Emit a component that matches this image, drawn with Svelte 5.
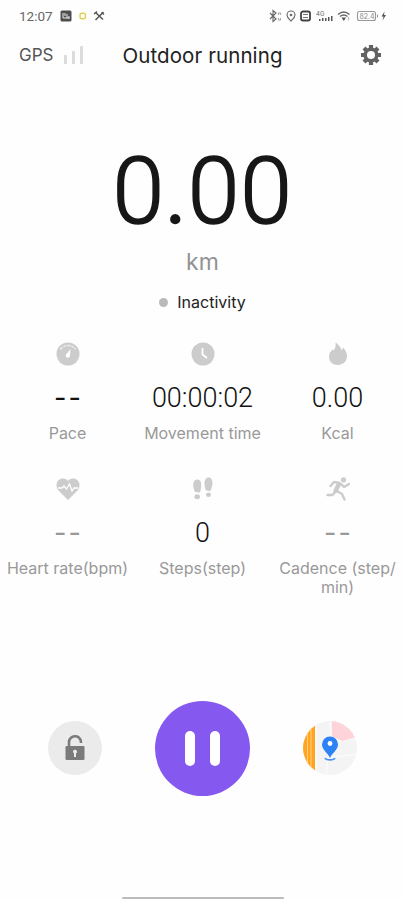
<script lang="ts">
  type Metric = {
    icon: string;
    value: string;
    label: string;
    idle?: boolean;
  };

  let paused = $state(false);

  const metrics: Metric[] = [
    { icon: 'pace', value: '--', label: 'Pace' },
    { icon: 'clock', value: '00:00:02', label: 'Movement time' },
    { icon: 'flame', value: '0.00', label: 'Kcal' },
    { icon: 'heart', value: '--', label: 'Heart rate(bpm)', idle: true },
    { icon: 'steps', value: '0', label: 'Steps(step)' },
    { icon: 'runner', value: '--', label: 'Cadence (step/ min)', idle: true },
  ];
</script>

<div class="screen">
  <div class="status-bar">
    <span class="time">12:07</span>
    <svg class="status-left" width="46" height="12" viewBox="0 0 46 12">
      <rect x="0.5" y="0.5" width="11" height="11" rx="1.5" fill="#4d4d4d" />
      <path d="M3 3v5h6M5 3v3M7 4v4M9 6v3" stroke="#eee" fill="none" />
      <rect x="20" y="3.2" width="5.5" height="5.5" rx="2" fill="none" stroke="#e3d04f" stroke-width="1.4" />
      <path d="M35.5 2.5l7.5 7M43.5 2l-8 8" stroke="#555" stroke-width="1.5" />
      <path d="M34 4l3-2.5M41.5 2.5l2.5 2" stroke="#555" stroke-width="1.5" />
    </svg>
    <svg class="status-right" width="118" height="14" viewBox="0 0 118 14">
      <g fill="none" stroke="#666" stroke-width="1.1">
        <path d="M1 4l6 6-3 2.5v-11l3 2.5-6 6" />
        <path d="M9.5 6V4h2v2M9.5 9v2h2V9" stroke="#aaa" />
        <path d="M22 12c-2-2-4-3.5-4-6a4 4 0 0 1 8 0c0 2.5-2 4-4 6z" />
        <circle cx="22" cy="6" r="0.8" />
        <rect x="32" y="2.5" width="9" height="9" rx="2" stroke="#444" stroke-width="1.8" />
        <path d="M34 5.5h5M34 8.5h5" stroke="#777" />
        <path d="M79.500 11.500V8" stroke="#bbb" />
        <path d="M69 5.500c3.500-3 8-3 11.500 0M71 7.500c2.500-2 5-2 7.500 0" stroke-width="1.500" />
        <rect x="88.500" y="2.500" width="18" height="9" rx="2" stroke="#999" />
        <path d="M108.500 5.500v3" stroke="#999" />
      </g>
      <path d="M50 10h1.500v2H50zM53 9h1.500v3H53zM56 9h1.500v3H56zM59 8h1.500v4H59zM62 7h1.500v5H62zM72.500 8.500h4.500l-2.200 3.500zM115.500 2.500l-3 5h2l-1 4 3.500-5.500h-2z" fill="#555" />
      <text x="47" y="6.500" class="tiny">4G</text>
      <text x="90.500" y="9.700" class="battery">82.4</text>
    </svg>
  </div>

  <header class="header">
    <div class="gps">
      <span>GPS</span>
      <svg width="20" height="18" viewBox="0 0 20 18" fill="#dcdcdc">
        <rect x="0" y="9" width="3" height="9" rx="0.5" />
        <rect x="8" y="5" width="3" height="13" rx="0.5" />
        <rect x="16" y="0" width="3" height="18" rx="0.5" />
      </svg>
    </div>
    <h1>Outdoor running</h1>
    <button type="button" class="settings" aria-label="Settings">
      <svg width="22" height="22" viewBox="0 0 22 22">
        <g stroke="#626262" stroke-width="4.200">
          <path d="M11 1v20M1 11h20" />
          <path d="M4 4l14 14M18 4L4 18" />
        </g>
        <circle cx="11" cy="11" r="7.600" fill="#626262" />
        <circle cx="11" cy="11" r="4" fill="#fff" />
      </svg>
    </button>
  </header>

  <section class="distance">
    <div class="distance-value">0<span class="point">.</span>00</div>
    <div class="unit">km</div>
    <div class="activity"><span class="dot"></span>Inactivity</div>
  </section>

  <section class="metrics">
    {#each metrics as metric}
      <div class="metric">
        <svg class="metric-icon" width="24" height="24" viewBox="0 0 24 24" fill="#cccccc">
          {#if metric.icon === 'pace'}
            <circle cx="12" cy="12" r="11.500" />
            <path d="M4.500 7.500a9 9 0 0 1 15 0" fill="none" stroke="#efefef" stroke-width="1.400" stroke-dasharray="3 1" />
            <path d="M14.500 7l-.5 6.500a2.200 2.200 0 1 1-3-2z" fill="#fff" />
          {:else if metric.icon === 'clock'}
            <circle cx="12" cy="12" r="11.500" />
            <path d="M11.500 6v6.500l4.500 3.500" fill="none" stroke="#fff" stroke-width="1.800" />
          {:else if metric.icon === 'flame'}
            <path d="M9.500 0.500c3 2 5 4.500 6 7.500 1-.5 1.500-1.500 1.500-2.500 3 3 4 6 4 8.500 0 5.500-4 9-9.200 9S3 20 3 14.500c0-3.500 2-5.500 3.500-7l1 1C9.500 6.500 10 3.500 9.500 0.500z" />
          {:else if metric.icon === 'heart'}
            <path d="M12 23L2.500 13.500C-1 9.500 0 2 6.500 1.500 9 1.300 11 2.500 12 4c1-1.500 3-2.700 5.500-2.500C24 2 25 9.500 21.500 13.500z" />
            <path d="M2 11h4l2-2 2.500 3 3-5 2.500 7 2-3h4" fill="none" stroke="#fff" stroke-width="1.300" />
          {:else if metric.icon === 'steps'}
            <path d="M6.500 2.500c3 0 4 3 3.700 6.500-.3 3-.7 5-1.200 6.500l-5-.5C3 12 2 10 2.200 7 2.400 4.500 4 2.500 6.500 2.500z" />
            <ellipse cx="6.200" cy="19.700" rx="2.800" ry="2.500" />
            <path d="M17.500 0.500c3 0 4 2.500 4 5.500 0 3-1 5-2 8l-4.500-.5c-.7-2-1.500-4-1.500-7 0-3.500 1.500-6 4-6z" />
            <ellipse cx="17.500" cy="17.800" rx="2.500" ry="2.300" />
          {:else}
            <circle cx="17.500" cy="2.800" r="2.600" />
            <g fill="none" stroke="#cccccc" stroke-linecap="round" stroke-linejoin="round">
              <path d="M13 7l-3.500 7" stroke-width="4.500" />
              <path d="M13.500 6L8 5 4.500 9M15 7l3 3 5-3M10 14l-3.500 4H1.500M11 14l5 3 2.500 5.500" stroke-width="2.400" />
            </g>
          {/if}
        </svg>
        <div class="value" class:idle={metric.idle} class:empty={metric.value === '--'}>{metric.value}</div>
        <div class="label">{metric.label}</div>
      </div>
    {/each}
  </section>

  <section class="controls">
    <button type="button" class="round lock" aria-label="Unlock">
      <svg width="20" height="26" viewBox="0 0 20 26">
        <path d="M4 12V7.500a6 6 0 0 1 12-.5v1" fill="none" stroke="#7b7b7b" stroke-width="2.600" />
        <rect x="0.500" y="11" width="19" height="14" rx="1.200" fill="#7b7b7b" />
        <path d="M8 17a2 2 0 1 1 3 1.500v3.500H9v-3.500z" fill="#eee" />
      </svg>
    </button>
    <button type="button" class="round pause" aria-label="Pause" onclick={() => (paused = !paused)}>
      {#if paused}
        <svg width="34" height="34" viewBox="0 0 34 34"><path d="M9 3l21 14L9 31z" fill="#fff" /></svg>
      {:else}
        <span class="pause-bar"></span>
        <span class="pause-bar"></span>
      {/if}
    </button>
    <button type="button" class="round map" aria-label="Map">
      <svg width="54" height="54" viewBox="0 0 54 54">
        <rect width="54" height="54" fill="#f4f4f4" />
        <path d="M0 0h12v54H0z" fill="#ffa51f" />
        <path d="M4.500 0v54M8 0v54" stroke="#ffd083" stroke-width="1" />
        <path d="M13 0v54M26 30l-3 24M28 19L27 0M28 21l26-4M24 37l30-4" stroke="#fafafa" stroke-width="1.500" fill="none" />
        <path d="M29 0h25v16l-15 4-10-5z" fill="#ffd4d8" />
        <path d="M27 37c-2-5-8-8-8-13.500a8 8 0 0 1 16 0c0 5.500-6 8.500-8 13.500z" fill="#2d83f5" />
        <circle cx="27" cy="22.500" r="2.400" fill="#fff" />
        <path d="M22 37c1 2.500 9 2.500 10 0" stroke="#4a94ef" stroke-width="1.800" fill="none" />
      </svg>
    </button>
  </section>

  <div class="home-bar"></div>
</div>

<style>
  :global(body) {
    background: #fefefe;
  }

  .screen {
    display: flex;
    flex-direction: column;
    width: 404px;
    height: 900px;
    box-sizing: border-box;
    overflow: hidden;
    background: #fefefe;
    color: #222;
    font-family: Inter, "Liberation Sans", sans-serif;
  }

  button {
    padding: 0;
    border: none;
    background: none;
    cursor: pointer;
  }

  svg {
    display: block;
  }

  .status-bar {
    display: flex;
    align-items: center;
    height: 32px;
    padding: 0 17px 0 19px;
  }

  .time {
    width: 41px;
    font-family: Roboto, sans-serif;
    font-size: 13.5px;
    color: #666;
  }

  .status-right {
    margin-left: auto;
  }

  .tiny {
    font-size: 6px;
    fill: #666;
  }

  .battery {
    font-size: 7px;
    fill: #888;
  }

  .header {
    display: grid;
    grid-template-columns: 1fr auto 1fr;
    align-items: center;
    height: 46px;
    padding: 0 22px 0 19px;
  }

  .gps {
    display: flex;
    align-items: center;
    gap: 11px;
    font-size: 17px;
    color: #555;
  }

  h1 {
    margin: 1px -2px 0 2px;
    font-size: 20.5px;
    font-weight: 400;
    letter-spacing: 0.1px;
  }

  .settings {
    justify-self: end;
  }

  .distance {
    display: flex;
    flex-direction: column;
    align-items: center;
    height: 262px;
    padding: 64px 0 0 1px;
    box-sizing: border-box;
  }

  .distance-value {
    height: 100px;
    line-height: 100px;
    font-family: Roboto, sans-serif;
    font-size: 93px;
    font-weight: 300;
    letter-spacing: 0.8px;
    color: #171717;
    -webkit-text-stroke: 1.6px #171717;
  }

  .point {
    -webkit-text-stroke-width: 2.6px;
  }

  .unit {
    margin-top: 4px;
    line-height: 32px;
    font-size: 23px;
    color: #929292;
  }

  .activity {
    display: flex;
    align-items: center;
    gap: 9px;
    margin-top: 14px;
    line-height: 20px;
    font-size: 16px;
  }

  .dot {
    width: 9px;
    height: 9px;
    border-radius: 50%;
    background: #b9b9b9;
  }

  .metrics {
    display: grid;
    grid-template-columns: repeat(3, 135px);
    grid-auto-rows: 135px;
  }

  .metric {
    display: flex;
    flex-direction: column;
    align-items: center;
    padding: 2px 6px 0;
  }

  .value {
    height: 32px;
    margin-top: 16px;
    line-height: 32px;
    font-family: Roboto, sans-serif;
    font-size: 27px;
    font-weight: 300;
    color: #111;
  }

  .value.empty {
    margin-right: -2px;
    line-height: 31px;
    font-family: Inter, sans-serif;
    font-weight: 400;
    letter-spacing: 2px;
  }

  .value.idle {
    color: #999;
  }

  .label {
    margin-top: 10px;
    line-height: 18.5px;
    font-size: 16px;
    color: #999;
    text-align: center;
  }

  .controls {
    display: flex;
    align-items: center;
    justify-content: space-between;
    height: 96px;
    margin-top: 90px;
    padding: 0 47px 0 48px;
  }

  .round {
    display: flex;
    align-items: center;
    justify-content: center;
    width: 54px;
    height: 54px;
    border-radius: 50%;
    overflow: hidden;
  }

  .lock {
    background: #ebebeb;
  }

  .pause {
    gap: 15px;
    width: 95px;
    height: 95px;
    background: #8559f0;
  }

  .pause-bar {
    width: 10px;
    height: 35px;
    border-radius: 5px;
    background: #fff;
  }

  .home-bar {
    width: 162px;
    height: 2px;
    margin: auto auto 1px 122px;
    border-radius: 1px;
    background: #bcbcbc;
  }
</style>
